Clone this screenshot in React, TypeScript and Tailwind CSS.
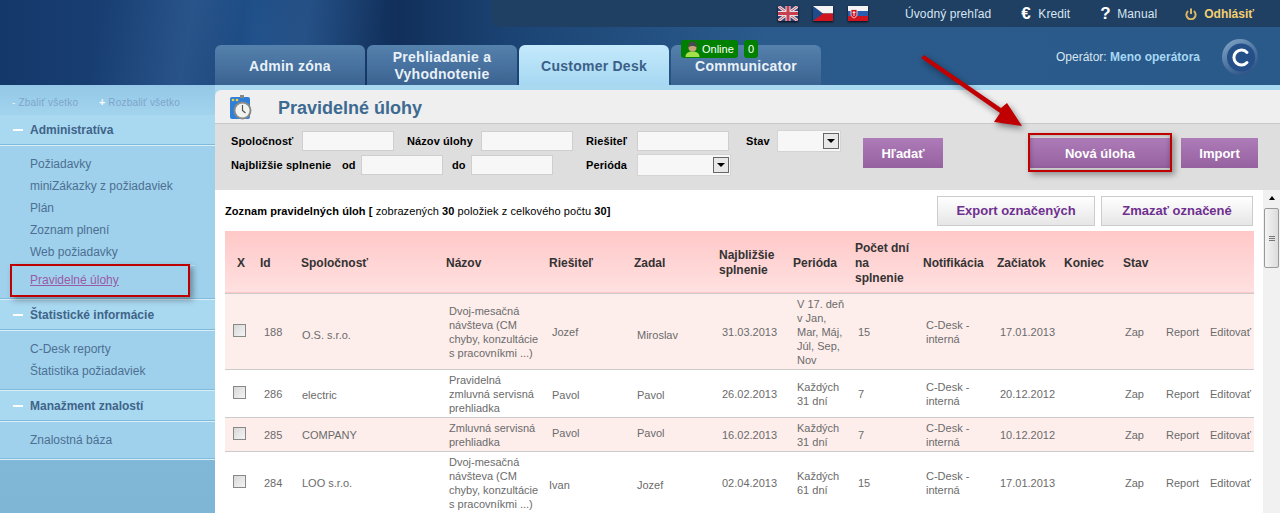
const tabs = [
  { label: "Admin zóna" },
  { label: "Prehliadanie a Vyhodnotenie" },
  { label: "Customer Desk", active: true },
  { label: "Communicator", online: true },
];

const menu = [
  {
    title: "Administratíva",
    items: ["Požiadavky", "miniZákazky z požiadaviek", "Plán", "Zoznam plnení", "Web požiadavky"],
    current: "Pravidelné úlohy",
  },
  { title: "Štatistické informácie", items: ["C-Desk reporty", "Štatistika požiadaviek"] },
  { title: "Manažment znalostí", items: ["Znalostná báza"] },
];

const rows = [
  {
    id: "188",
    company: "O.S. s.r.o.",
    companyPad: "pt-[9px]",
    name: "Dvoj-mesačná návšteva (CM chyby, konzultácie s pracovníkmi ...)",
    solver: "Jozef",
    solverPad: "pl-[6px] pt-[3px] pb-[2px]",
    by: "Miroslav",
    byPad: "pt-[9px] pb-[2px]",
    date: "31.03.2013",
    period: "V 17. deň v Jan, Mar, Máj, Júl, Sep, Nov",
    days: "15",
    start: "17.01.2013",
  },
  {
    id: "286",
    company: "electric",
    companyPad: "pt-[5px]",
    name: "Pravidelná zmluvná servisná prehliadka",
    solver: "Pavol",
    solverPad: "pl-[6px] pt-[5px] pb-[2px]",
    by: "Pavol",
    byPad: "pt-[5px] pb-[2px]",
    date: "26.02.2013",
    period: "Každých 31 dní",
    days: "7",
    start: "20.12.2012",
  },
  {
    id: "285",
    company: "COMPANY",
    companyPad: "pt-[3px]",
    name: "Zmluvná servisná prehliadka",
    solver: "Pavol",
    solverPad: "pl-[6px] pt-[3px] pb-[6px]",
    by: "Pavol",
    byPad: "pt-[3px] pb-[6px]",
    date: "16.02.2013",
    period: "Každých 31 dní",
    days: "7",
    start: "10.12.2012",
  },
  {
    id: "284",
    company: "LOO s.r.o.",
    companyPad: "pt-[3px]",
    name: "Dvoj-mesačná návšteva (CM chyby, konzultácie s pracovníkmi ...)",
    solver: "Ivan",
    solverPad: "pl-[3px] pt-[7px] pb-[2px]",
    by: "Jozef",
    byPad: "pt-[7px] pb-[2px]",
    date: "02.04.2013",
    period: "Každých 61 dní",
    days: "15",
    start: "17.01.2013",
  },
];

function FlagUk() {
  return (
    <svg width="20" height="15" viewBox="0 0 20 15" className="shadow-[0_1px_2px_rgba(0,0,0,0.8)]">
      <rect width="20" height="15" fill="#3a3f72" />
      <path d="M0 0L20 15M20 0L0 15" stroke="#e8dfe4" strokeWidth="3" />
      <path d="M0 0L20 15M20 0L0 15" stroke="#c8505f" strokeWidth="1" />
      <path d="M10 0V15M0 7.5H20" stroke="#e8dfe4" strokeWidth="5" />
      <path d="M10 0V15M0 7.5H20" stroke="#c8404f" strokeWidth="3" />
    </svg>
  );
}

function FlagCz() {
  return (
    <svg width="20" height="15" viewBox="0 0 20 15" className="shadow-[0_1px_2px_rgba(0,0,0,0.8)]">
      <rect width="20" height="7.5" fill="#f4f4f4" />
      <rect y="7.5" width="20" height="7.5" fill="#d0141f" />
      <path d="M0 0L10 7.5L0 15Z" fill="#1f4a8c" />
    </svg>
  );
}

function FlagSk() {
  return (
    <svg width="20" height="15" viewBox="0 0 20 15" className="shadow-[0_1px_2px_rgba(0,0,0,0.8)]">
      <rect width="20" height="5" fill="#f4f4f4" />
      <rect y="5" width="20" height="5" fill="#2a5cb0" />
      <rect y="10" width="20" height="5" fill="#d0141f" />
      <path d="M3 3.5H9V8.5C9 10.5 7 11.5 6 12C5 11.5 3 10.5 3 8.5Z" fill="#d0141f" stroke="#f4f4f4" strokeWidth="0.8" />
      <path d="M6 5V10M4.6 6.5H7.4" stroke="#fff" strokeWidth="0.9" />
    </svg>
  );
}

function PersonIcon() {
  return (
    <svg width="15" height="16" viewBox="0 0 15 16">
      <path d="M0.5 16C0.5 12 3.5 10.5 7.5 10.5C11.5 10.5 14.5 12 14.5 16Z" fill="#a4e04a" />
      <circle cx="7.5" cy="6.5" r="4" fill="#c9a27c" />
      <path d="M3.2 6.5C3 2.5 5 0.5 7.5 0.5C10 0.5 12 2.5 11.8 6.5C10 4.5 5 4.5 3.2 6.5Z" fill="#4a4a4a" />
    </svg>
  );
}

function LogoC() {
  return (
    <svg width="38" height="38" viewBox="0 0 38 38">
      <defs>
        <linearGradient id="logoRing" x1="0" y1="0" x2="0.6" y2="1">
          <stop offset="0" stopColor="#86a8c8" />
          <stop offset="0.6" stopColor="#4f76a2" />
          <stop offset="1" stopColor="#2f5688" />
        </linearGradient>
      </defs>
      <circle cx="19" cy="19" r="18" fill="url(#logoRing)" />
      <circle cx="20" cy="19.5" r="14" fill="#244f88" />
      <path d="M26 14.5A7.5 7.5 0 1 0 26 24.5" fill="none" stroke="#fff" strokeWidth="3" strokeLinecap="round" />
    </svg>
  );
}

function ClockIcon() {
  return (
    <svg width="24" height="26" viewBox="0 0 24 26">
      <rect x="0" y="2" width="20" height="22" rx="2" fill="#2f7fd8" />
      <rect x="10" y="0" width="4" height="3" fill="#888" />
      <circle cx="12.5" cy="15.5" r="9" fill="#8a8a8a" />
      <circle cx="12.5" cy="15.5" r="7" fill="#f2f2ee" />
      <path d="M12.5 10V15.5L15.5 18" fill="none" stroke="#555" strokeWidth="1.2" />
      <circle cx="3" cy="5" r="1.3" fill="#f0d040" />
      <circle cx="7" cy="5" r="1.3" fill="#f0d040" />
    </svg>
  );
}

function FilterInput({ width }: { width: string }) {
  return <input type="text" className={`${width} h-[20px] border border-[#cfcfcf] bg-[#f7f7f7]`} />;
}

function FilterSelect({ width }: { width: string }) {
  return (
    <div className={`${width} h-[22px] flex items-center justify-end pr-[1px] border border-[#d4d4d4] bg-[#f7f7f7]`}>
      <div className="w-[16px] h-[16px] flex items-center justify-center border border-[#666] bg-[#e8e8e8]">
        <div className="w-0 h-0 border-x-[4px] border-x-transparent border-t-[4px] border-t-black" />
      </div>
    </div>
  );
}

function PurpleButton({ label, width }: { label: string; width: string }) {
  return (
    <div className={`${width} h-[30px] pt-[1px] flex items-center justify-center bg-gradient-to-b from-[#ad7cb8] to-[#96619f] text-[13px] font-bold text-white`}>
      {label}
    </div>
  );
}

function HeaderBar() {
  return (
    <header className="h-[85px] flex flex-col bg-[linear-gradient(100deg,transparent_8%,rgba(90,140,200,0.22)_15%,transparent_19%,rgba(90,140,200,0.18)_24%,transparent_30%),linear-gradient(90deg,#15386a_0%,#1b4479_15%,#1f4f88_20%,#112f5a_31%,#1b4474_40%,#2a5b8c_60%,#2a5a8a_100%)]">
      <div className="h-[27px] ml-[492px] flex items-center rounded-bl-md bg-[#1f3f63] text-[12px] text-[#d8e6f0]">
        <div className="ml-[286px] flex gap-[15px]">
          <FlagUk />
          <FlagCz />
          <FlagSk />
        </div>
        <span className="ml-[37px] tracking-[0.1px]">Úvodný prehľad</span>
        <span className="ml-[30px] w-[17px] text-[17px] font-bold text-white">€</span>
        <span className="tracking-[0.1px]">Kredit</span>
        <span className="ml-[30px] w-[17px] text-[17px] font-bold text-white">?</span>
        <span className="tracking-[0.1px]">Manual</span>
        <svg width="12" height="12" viewBox="0 0 12 12" className="ml-[28px]">
          <path d="M3.2 3A4.6 4.6 0 1 0 8.8 3" fill="none" stroke="#d9b863" strokeWidth="2" />
          <path d="M6 0.5V6" stroke="#d9b863" strokeWidth="2" />
        </svg>
        <span className="ml-[7px] font-bold text-[#f5cf6e]">Odhlásiť</span>
      </div>
      <div className="mt-[18px] ml-[215px] h-[40px] flex items-stretch">
        <div className="flex gap-[2px]">
          {tabs.map((tab) => (
            <div
              key={tab.label}
              className={`relative w-[150px] px-[16px] pt-[2px] flex items-center justify-center rounded-t-md text-center text-[14px] leading-[17px] font-bold tracking-[0.25px] ${
                tab.active
                  ? "bg-gradient-to-b from-[#c4e9fc] to-[#a6d8f2] text-[#3b6088]"
                  : "bg-gradient-to-b from-[#5581ad] to-[#3b6391] text-[#e9f1f8]"
              }`}
            >
              {tab.label}
              {tab.online && (
                <div className="absolute left-[10px] top-[-5px] flex gap-[6px] text-[11px] font-normal tracking-normal text-white">
                  <div className="h-[18px] w-[57px] pl-[4px] flex items-center gap-[2px] rounded-[3px] bg-[#008000]">
                    <PersonIcon />
                    <span>Online</span>
                  </div>
                  <div className="h-[18px] w-[14px] flex items-center justify-center rounded-[3px] bg-[#008000]">0</div>
                </div>
              )}
            </div>
          ))}
        </div>
        <div className="ml-auto mr-[21px] -mt-[6px] h-[36px] flex items-center text-[12px] text-[#d8e6f0]">
          <span>
            Operátor: <span className="font-bold text-[#a6d8f5]">Meno operátora</span>
          </span>
          <div className="ml-[21px]">
            <LogoC />
          </div>
        </div>
      </div>
    </header>
  );
}

function Sidebar() {
  return (
    <aside className="w-[215px] flex flex-col bg-gradient-to-b from-[#8bc0df] to-[#7fb6d6]">
      <div className="h-[30px] pt-[10px] pl-[12px] flex gap-[21px] bg-gradient-to-b from-[#94c8e6] to-[#a3d4ee] text-[10px] tracking-[0.2px] text-[#7ea5cc]">
        <span>
          <span className="text-[#e6f2f9]">-</span> Zbaliť všetko
        </span>
        <span>
          <span className="font-bold text-white">+</span> Rozbaliť všetko
        </span>
      </div>
      {menu.map((group) => (
        <section key={group.title}>
          <div className="h-[29px] flex items-center bg-[#a9d8f1] text-[12px] font-bold text-[#3f6488]">
            <div className="ml-[13px] mr-[7px] w-[10px] h-[2px] bg-white" />
            {group.title}
          </div>
          <div className="h-[2px] border-t border-t-[#7fbbdc] border-b border-b-[#d9eef9]" />
          <ul className="bg-[#9fd1ec] pt-[7px] pb-[7px] pl-[30px] text-[12px] text-[#4d6f92]">
            {group.items.map((item) => (
              <li key={item} className="h-[22px] leading-[22px]">
                {item}
              </li>
            ))}
            {group.current && (
              <li className="relative mt-[6px] h-[22px] leading-[22px] text-[#9a5aa8] underline">
                <div className="absolute left-[-10px] right-[20px] top-[-4px] h-px bg-[#c5e3f4]" />
                {group.current}
                <div className="absolute left-[-20px] top-[-5px] w-[180px] h-[33px] border-[2px] border-[#c00000] shadow-[3px_3px_6px_rgba(0,0,0,0.35)]" />
              </li>
            )}
          </ul>
          <div className="h-[2px] border-t border-t-[#7fbbdc] border-b border-b-[#d9eef9]" />
        </section>
      ))}
    </aside>
  );
}

function FilterBar() {
  return (
    <div className="h-[67px] flex bg-[#dedede] border-t border-t-[#c8c8c8] pl-[16px] text-[11px] font-bold text-black">
      <div className="w-[610px] pt-[6px] tracking-[0.1px]">
        <div className="flex items-center h-[22px]">
          <span className="w-[71px]">Spoločnosť</span>
          <FilterInput width="w-[92px]" />
          <span className="ml-[13px] w-[74px]">Názov úlohy</span>
          <FilterInput width="w-[92px]" />
          <span className="ml-[13px] w-[51px]">Riešiteľ</span>
          <FilterInput width="w-[92px]" />
          <span className="ml-[17px] w-[31px]">Stav</span>
          <FilterSelect width="w-[64px]" />
        </div>
        <div className="mt-[2px] flex items-center h-[22px]">
          <span className="w-[111px]">Najbližšie splnenie</span>
          <span className="w-[19px]">od</span>
          <FilterInput width="w-[82px]" />
          <span className="ml-[9px] w-[19px]">do</span>
          <FilterInput width="w-[82px]" />
          <span className="ml-[33px] w-[51px]">Perióda</span>
          <FilterSelect width="w-[94px]" />
        </div>
      </div>
      <div className="ml-[22px] pt-[14px] flex items-start">
        <PurpleButton label="Hľadať" width="w-[80px]" />
        <div className="relative ml-[87px]">
          <PurpleButton label="Nová úloha" width="w-[140px]" />
          <div className="absolute -left-[2px] -right-[2px] -top-[5px] -bottom-[4px] border-[2px] border-[#c00000] shadow-[3px_3px_6px_rgba(0,0,0,0.35),inset_0_0_5px_rgba(0,0,0,0.3)]" />
        </div>
        <div className="ml-[11px]">
          <PurpleButton label="Import" width="w-[77px]" />
        </div>
      </div>
    </div>
  );
}

function TaskTable() {
  const head = "pl-[3px] pt-[3px] text-left font-bold align-middle";
  const cell = "pt-[3px] pb-[2px] align-middle";
  return (
    <table className="w-[1029px] table-fixed border-collapse text-[11px] leading-[14px] text-[#6b6b6b]">
      <colgroup>
        <col className="w-[32px]" />
        <col className="w-[41px]" />
        <col className="w-[145px]" />
        <col className="w-[103px]" />
        <col className="w-[85px]" />
        <col className="w-[85px]" />
        <col className="w-[74px]" />
        <col className="w-[62px]" />
        <col className="w-[68px]" />
        <col className="w-[74px]" />
        <col className="w-[67px]" />
        <col className="w-[59px]" />
        <col className="w-[43px]" />
        <col className="w-[44px]" />
        <col className="w-[47px]" />
      </colgroup>
      <thead>
        <tr className="h-[62px] bg-gradient-to-b from-[#ffc8c8] to-[#ffe0e0] text-[12px] leading-[15px] text-[#333] border-b border-b-[#ccc]">
          <th className="pl-[12px] pt-[3px] text-left font-bold align-middle">X</th>
          <th className={head}>Id</th>
          <th className={head}>Spoločnosť</th>
          <th className={head}>Názov</th>
          <th className={head}>Riešiteľ</th>
          <th className={head}>Zadal</th>
          <th className={head}>Najbližšie splnenie</th>
          <th className={head}>Perióda</th>
          <th className={`${head} pr-[8px]`}>Počet dní na splnenie</th>
          <th className={head}>Notifikácia</th>
          <th className={head}>Začiatok</th>
          <th className={head}>Koniec</th>
          <th className={head}>Stav</th>
          <th />
          <th />
        </tr>
      </thead>
      <tbody>
        {rows.map((row, index) => (
          <tr key={row.id} className={`border-b border-b-[#ccc] ${index % 2 === 0 ? "bg-[#fdeeec]" : "bg-white"}`}>
            <td className="pl-[8px] pb-[2px] align-middle">
              <input type="checkbox" className="block appearance-none w-[13px] h-[13px] border border-[#888] bg-gradient-to-br from-[#d8d8d8] to-[#f4f4f4]" />
            </td>
            <td className={`${cell} pl-[7px]`}>{row.id}</td>
            <td className={`pl-[4px] pb-[2px] align-middle ${row.companyPad}`}>{row.company}</td>
            <td className={`${cell} pl-[6px] pr-[6px]`}>{row.name}</td>
            <td className={`align-middle ${row.solverPad}`}>{row.solver}</td>
            <td className={`pl-[6px] align-middle ${row.byPad}`}>{row.by}</td>
            <td className={`${cell} pl-[6px]`}>{row.date}</td>
            <td className={`${cell} pl-[7px] pr-[6px]`}>{row.period}</td>
            <td className={`${cell} pl-[6px]`}>{row.days}</td>
            <td className={`${cell} pl-[6px] pr-[8px]`}>C-Desk - interná</td>
            <td className={`${cell} pl-[6px]`}>{row.start}</td>
            <td className={cell} />
            <td className={`${cell} pl-[5px]`}>Zap</td>
            <td className={`${cell} pl-[3px]`}>Report</td>
            <td className={`${cell} pl-[3px] whitespace-nowrap`}>Editovať</td>
          </tr>
        ))}
      </tbody>
    </table>
  );
}

function Scrollbar() {
  return (
    <div className="w-[17px] bg-[#f1f1f1] flex flex-col items-center">
      <div className="mt-[6px] w-0 h-0 border-x-[3px] border-x-transparent border-b-[4px] border-b-black" />
      <div className="mt-[8px] w-[15px] h-[60px] flex flex-col items-center justify-center gap-[1px] rounded-[2px] border border-[#999] bg-gradient-to-r from-[#f4f4f4] to-[#dcdcdc]">
        <div className="w-[6px] h-px bg-[#777]" />
        <div className="w-[6px] h-px bg-[#777]" />
        <div className="w-[6px] h-px bg-[#777]" />
      </div>
    </div>
  );
}

export default function App() {
  return (
    <div className="relative w-[1280px] h-[513px] overflow-hidden flex flex-col bg-white font-['Liberation_Sans',Arial,sans-serif]">
      <HeaderBar />
      <div className="flex-1 min-h-0 flex">
        <Sidebar />
        <main className="flex-1 min-w-0 flex flex-col bg-[#a9d8f1] pt-[5px]">
          <div className="h-[33px] flex items-start pt-[5px] pl-[15px] rounded-tl-md bg-[#efefef]">
            <ClockIcon />
            <h1 className="ml-[24px] text-[18px] leading-[26px] font-bold text-[#3d6a91]">Pravidelné úlohy</h1>
          </div>
          <FilterBar />
          <div className="flex-1 min-h-0 flex bg-white">
            <div className="flex-1 min-w-0 pl-[10px]">
              <div className="w-[1028px] pt-[6px] pb-[5px] flex items-center justify-between">
                <p className="text-[11px] tracking-[0.08px] text-black">
                  <b>Zoznam pravidelných úloh [</b> zobrazených <b>30</b> položiek z celkového počtu <b>30]</b>
                </p>
                <div className="flex gap-[6px]">
                  <div className="w-[158px] h-[30px] flex items-center justify-center border border-[#ccc] bg-gradient-to-b from-white to-[#e6e6e6] text-[13px] font-bold text-[#6f2f8f]">
                    Export označených
                  </div>
                  <div className="w-[152px] h-[30px] flex items-center justify-center border border-[#ccc] bg-gradient-to-b from-white to-[#e6e6e6] text-[13px] font-bold text-[#6f2f8f]">
                    Zmazať označené
                  </div>
                </div>
              </div>
              <TaskTable />
            </div>
            <Scrollbar />
          </div>
        </main>
      </div>
      {/* annotation arrow */}
      <svg width="120" height="85" viewBox="0 0 120 85" className="absolute left-[915px] top-[50px] drop-shadow-[2px_3px_3px_rgba(0,0,0,0.45)]">
        <path d="M6 8L9 5L86 58L92 53L107 76L79 72L85 63Z" fill="#c00000" />
      </svg>
    </div>
  );
}
